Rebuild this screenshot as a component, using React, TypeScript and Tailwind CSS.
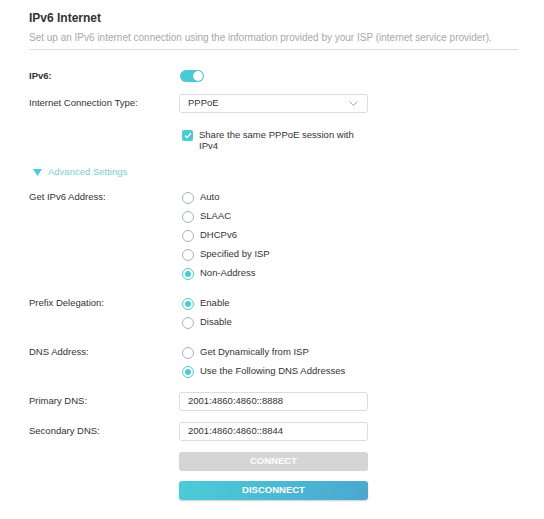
import React from "react";

const font = { fontFamily: '"Liberation Sans", Arial, sans-serif' };

function Radio({ checked, label }: { checked?: boolean; label: string }) {
  return (
    <div className="flex h-[19px] items-center">
      <span
        className={
          "flex h-[12px] w-[12px] items-center justify-center rounded-full border bg-white " +
          (checked ? "border-[#4acbd6]" : "border-[#a9b4b8]")
        }
      >
        {checked && <span className="h-[6px] w-[6px] rounded-full bg-[#4acbd6]" />}
      </span>
      <span className="ml-[6px] text-[9.5px] text-[#333]">{label}</span>
    </div>
  );
}

function Row({ label, children, className }: { label: string; children: React.ReactNode; className?: string }) {
  return (
    <div className={"flex " + (className || "")}>
      <div className="w-[150px] shrink-0">
        <div className="flex h-[19px] items-center text-[9.5px] text-[#333]">{label}</div>
      </div>
      <div className="w-[189px]">{children}</div>
    </div>
  );
}

export default function App() {
  return (
    <div className="min-h-[519px] w-[544px] bg-white pl-[29px] pr-[26px] pt-[10px]" style={font}>
      <div className="h-[17px] text-[12px] font-bold leading-[17px] text-[#333]">IPv6 Internet</div>
      <div className="mt-[5px] h-[12px] text-[10px] leading-[12px] text-[#a8a8a8]">
        Set up an IPv6 internet connection using the information provided by your ISP (internet service provider).
      </div>
      <div className="mt-[5px] h-px bg-[#dedede]" />

      <div className="mt-[20px] flex h-[12px] items-center">
        <div className="w-[151px] text-[9.5px] font-bold text-[#333]">IPv6:</div>
        <div className="flex h-[12px] w-[24px] items-center justify-end rounded-full bg-[#4acbd6] pr-[1px]">
          <span className="h-[10px] w-[10px] rounded-full bg-white shadow-[0_0_1px_rgba(0,0,0,0.3)]" />
        </div>
      </div>

      <Row label="Internet Connection Type:" className="mt-[12px]">
        <div className="flex h-[19px] items-center justify-between rounded-[3px] border border-[#dcdcdc] pl-[8px] pr-[9px] text-[9.5px] text-[#333]">
          <span>PPPoE</span>
          <svg width="9" height="5" viewBox="0 0 9 5" fill="none">
            <path d="M0.5 0.5 L4.5 4.5 L8.5 0.5" stroke="#9aa3a6" strokeWidth="0.9" />
          </svg>
        </div>
      </Row>

      <div className="mt-[16px] flex pl-[153px]">
        <span className="mt-[1px] flex h-[11px] w-[11px] shrink-0 items-center justify-center rounded-[2px] bg-[#4acbd6]">
          <svg width="8" height="7" viewBox="0 0 8 7" fill="none">
            <path d="M1 3.5 L3 5.5 L7 1.2" stroke="white" strokeWidth="1.4" />
          </svg>
        </span>
        <div className="ml-[6px] w-[170px] text-[9.5px] leading-[11px] text-[#333]">
          Share the same PPPoE session with IPv4
        </div>
      </div>

      <div className="mt-[14px] flex h-[14px] items-center pl-[4px]">
        <svg width="9" height="7" viewBox="0 0 9 7">
          <path d="M0 0 L9 0 L4.5 7 Z" fill="#4acbd6" />
        </svg>
        <span className="ml-[6px] text-[9.5px] text-[#7ccbd6]">Advanced Settings</span>
      </div>

      <Row label="Get IPv6 Address:" className="mt-[9px]">
        <div className="pl-[3px]">
          <Radio label="Auto" />
          <Radio label="SLAAC" />
          <Radio label="DHCPv6" />
          <Radio label="Specified by ISP" />
          <Radio label="Non-Address" checked />
        </div>
      </Row>

      <Row label="Prefix Delegation:" className="mt-[11px]">
        <div className="pl-[3px]">
          <Radio label="Enable" checked />
          <Radio label="Disable" />
        </div>
      </Row>

      <Row label="DNS Address:" className="mt-[11px]">
        <div className="pl-[3px]">
          <Radio label="Get Dynamically from ISP" />
          <Radio label="Use the Following DNS Addresses" checked />
        </div>
      </Row>

      <Row label="Primary DNS:" className="mt-[11px]">
        <div className="flex h-[19px] items-center rounded-[3px] border border-[#dcdcdc] pl-[8px] text-[9.5px] text-[#333]">
          2001:4860:4860::8888
        </div>
      </Row>

      <Row label="Secondary DNS:" className="mt-[11px]">
        <div className="flex h-[19px] items-center rounded-[3px] border border-[#dcdcdc] pl-[8px] text-[9.5px] text-[#333]">
          2001:4860:4860::8844
        </div>
      </Row>

      <div className="mt-[11px] pl-[150px]">
        <div className="flex h-[19px] w-[189px] items-center justify-center rounded-[3px] bg-[#d5d5d5] text-[9.5px] font-bold text-white">
          CONNECT
        </div>
        <div className="mt-[10px] flex h-[19px] w-[189px] items-center justify-center rounded-[3px] bg-gradient-to-r from-[#4ccbd7] to-[#4ba8d0] text-[9.5px] font-bold text-white shadow-[0_1px_2px_rgba(0,0,0,0.2)]">
          DISCONNECT
        </div>
      </div>
    </div>
  );
}
